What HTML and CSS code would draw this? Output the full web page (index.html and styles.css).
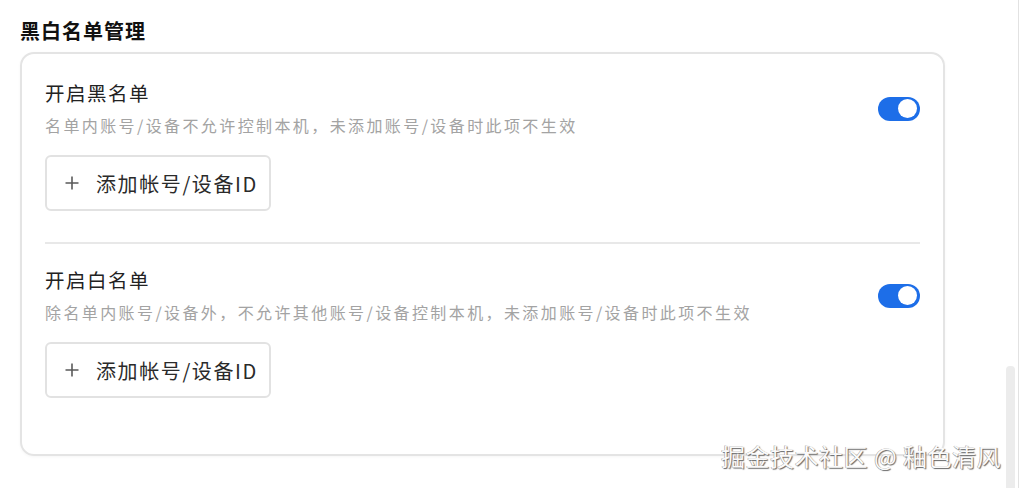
FILE: index.html
```html
<!DOCTYPE html>
<html lang="zh-CN">
<head>
<meta charset="utf-8">
<title>黑白名单管理</title>
<link rel="stylesheet" href="styles.css">
</head>
<body>
<div class="page">
  <main class="content">
    <h2 class="heading">黑白名单管理</h2>
    <section class="card">
      <div class="block">
        <div class="block-head">
          <div class="texts">
            <div class="title">开启黑名单</div>
            <div class="desc">名单内账号/设备不允许控制本机，未添加账号/设备时此项不生效</div>
          </div>
          <span class="switch on"><span class="knob"></span></span>
        </div>
        <button class="add-btn">
          <svg class="plus" width="16" height="16" viewBox="0 0 16 16"><path d="M8 1.5v13M1.5 8h13" stroke="#5a5a5a" stroke-width="1.6" fill="none"/></svg>
          <span>添加帐号/设备ID</span>
        </button>
      </div>
      <hr class="divider">
      <div class="block">
        <div class="block-head">
          <div class="texts">
            <div class="title">开启白名单</div>
            <div class="desc">除名单内账号/设备外，不允许其他账号/设备控制本机，未添加账号/设备时此项不生效</div>
          </div>
          <span class="switch on"><span class="knob"></span></span>
        </div>
        <button class="add-btn">
          <svg class="plus" width="16" height="16" viewBox="0 0 16 16"><path d="M8 1.5v13M1.5 8h13" stroke="#5a5a5a" stroke-width="1.6" fill="none"/></svg>
          <span>添加帐号/设备ID</span>
        </button>
      </div>
    </section>
  </main>
  <div class="scrollbar"><div class="thumb"></div></div>
  <div class="watermark">掘金技术社区 @ 釉色清风</div>
</div>
</body>
</html>
```

FILE: styles.css
```css
* { box-sizing: border-box; }
html, body { margin: 0; padding: 0; background: #fff; }
body {
  font-family: "Noto Sans CJK SC", "Noto Sans", sans-serif;
  color: #222;
  width: 1022px;
  height: 488px;
  overflow: hidden;
}
.page {
  position: relative;
  display: flex;
  height: 488px;
}
.content {
  width: 1004px;
  padding: 19px 0 0 20px;
}
.heading {
  margin: 0;
  font-size: 20px;
  line-height: 23px;
  font-weight: 700;
  letter-spacing: 1px;
  color: #111;
}
.card {
  margin-top: 10px;
  width: 925px;
  height: 404px;
  border: 2px solid #e4e4e4;
  border-radius: 14px;
  padding: 27px 23px 0 23px;
  box-shadow: 0 1px 3px rgba(0,0,0,0.04);
}
.block-head {
  display: flex;
  align-items: center;
  justify-content: space-between;
}
.title {
  font-size: 19.5px;
  line-height: 24px;
  letter-spacing: 1.5px;
  color: #222;
}
.desc {
  margin-top: 9px;
  font-size: 16px;
  line-height: 22px;
  letter-spacing: 2.4px;
  color: #a3a3a3;
}
.switch {
  width: 42px;
  height: 24px;
  border-radius: 12px;
  background: #1d6ee8;
  display: flex;
  align-items: center;
  justify-content: flex-end;
  padding-right: 3px;
  flex-shrink: 0;
}
.knob {
  width: 19px;
  height: 19px;
  border-radius: 50%;
  background: #fff;
}
.add-btn {
  margin-top: 19px;
  width: 226px;
  height: 56px;
  display: flex;
  align-items: center;
  gap: 16px;
  padding: 0 0 0 17px;
  border: 2px solid #e2e2e2;
  border-radius: 6px;
  background: #fff;
  font-family: inherit;
  font-size: 20px;
  letter-spacing: 1.6px;
  color: #2a2a2a;
  cursor: pointer;
}
.plus { flex-shrink: 0; }
.divider {
  margin: 31px 0 24px 0;
  border: 0;
  height: 2px;
  background: #e8e8e8;
}
.scrollbar {
  width: 15px;
  border-right: 1px solid #e2e2e2;
  padding-top: 366px;
  padding-left: 2px;
}
.thumb {
  width: 9px;
  height: 130px;
  border-radius: 4px;
  background: #ececec;
}
.watermark {
  position: absolute;
  left: 721px;
  top: 441px;
  font-size: 24px;
  line-height: 30px;
  letter-spacing: 0.5px;
  color: #fafafa;
  text-shadow: 1px 1px 1px #666, -0.5px -0.5px 0 #999;
  white-space: nowrap;
}
```
